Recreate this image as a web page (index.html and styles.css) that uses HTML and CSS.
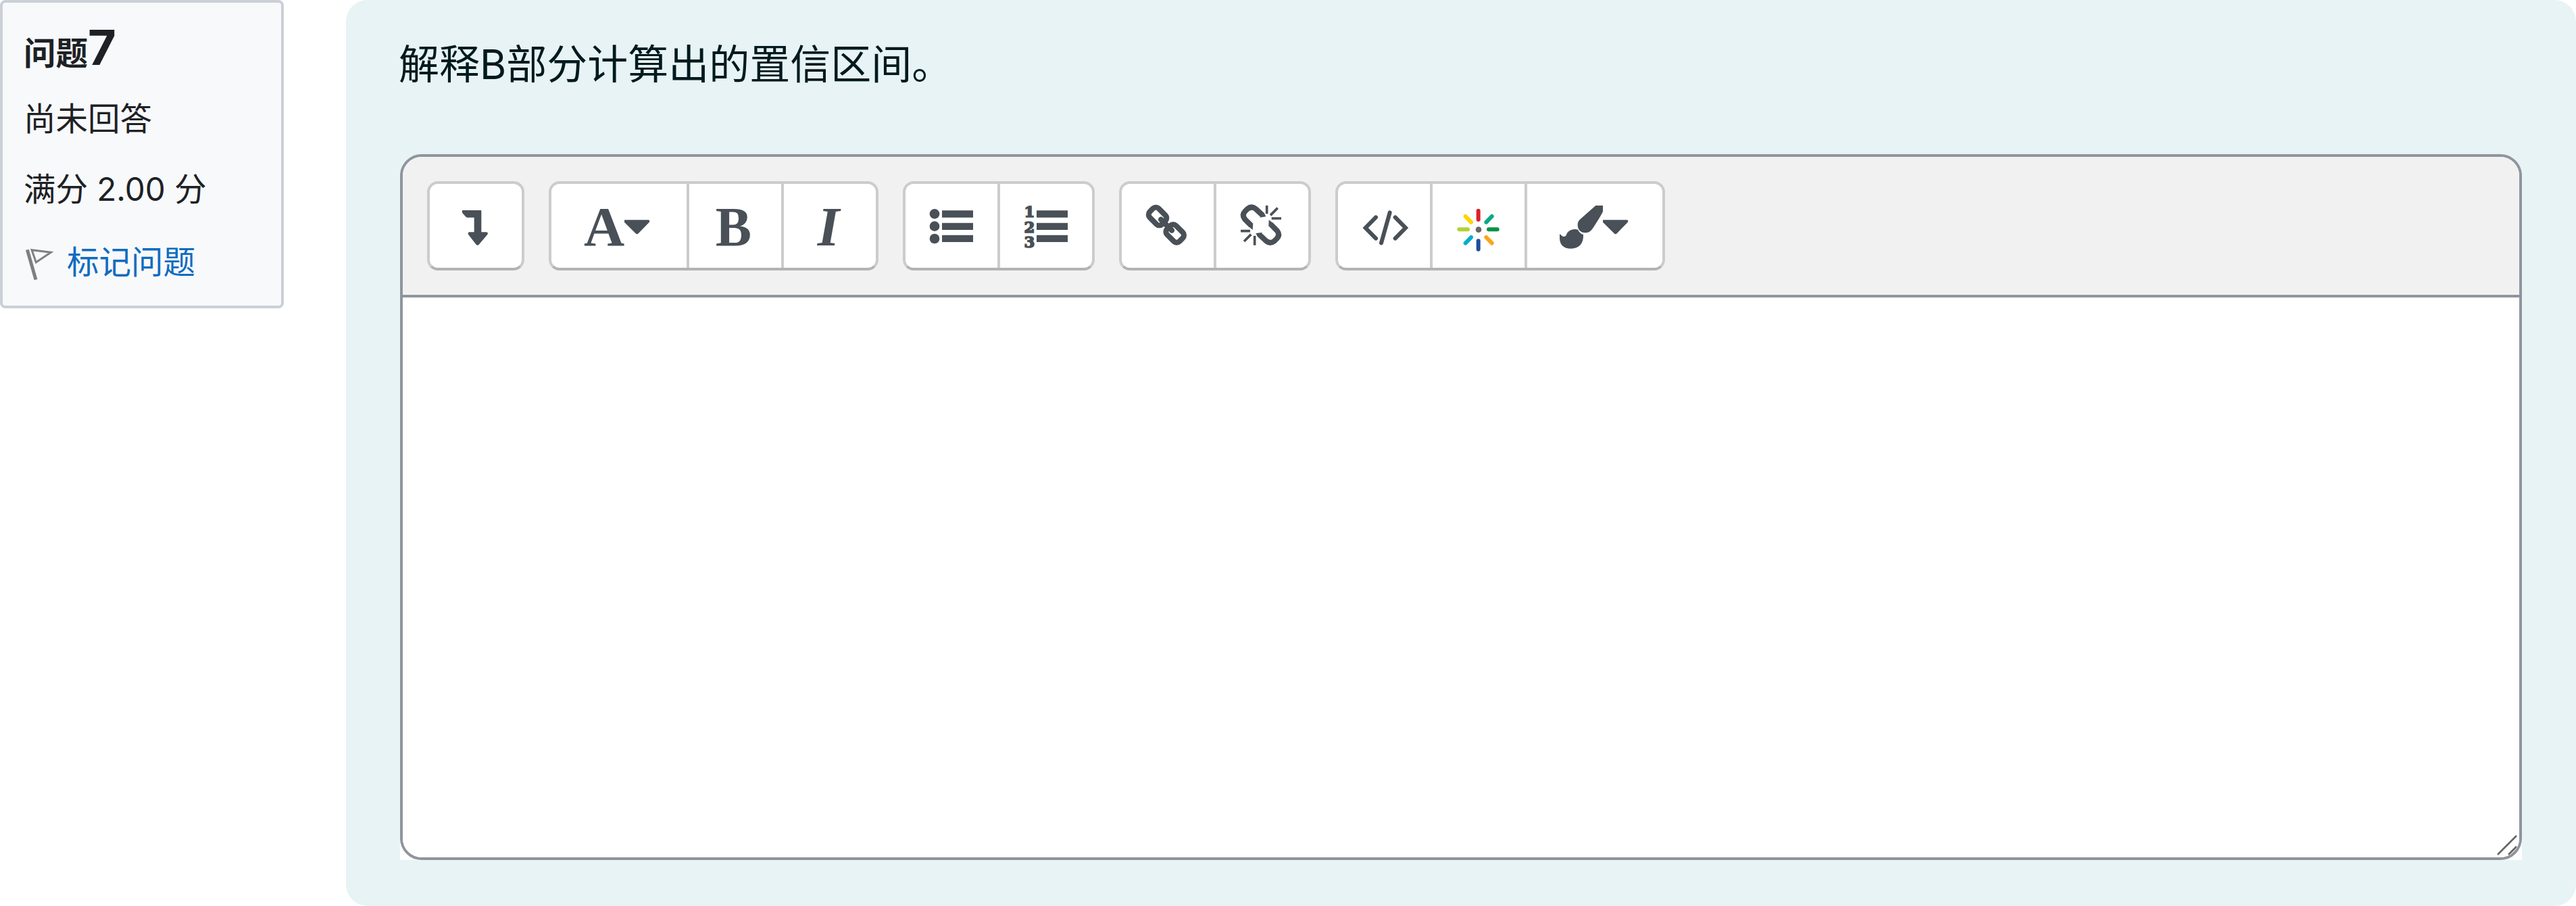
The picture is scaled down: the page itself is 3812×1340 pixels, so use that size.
FILE: index.html
```html
<!DOCTYPE html>
<html lang="zh-CN">
<head>
<meta charset="utf-8">
<title>问题 7</title>
<link rel="stylesheet" href="styles.css">
</head>
<body>
<div class="question">
  <aside class="info">
    <h3 class="number">问题<span class="qno">7</span></h3>
    <div class="state">尚未回答</div>
    <div class="grade">满分 2.00 分</div>
    <a class="flag">
      <svg class="flag-icon" viewBox="0 0 144 150"><g transform="translate(-108 -1100)" fill="none" stroke="#7f7f7f"><path stroke-width="15" d="M124 1110L162 1243"/><path stroke-width="9" d="M144 1111L229 1122L163 1166Z"/></g></svg>
      <span>标记问题</span>
    </a>
  </aside>
  <main class="content">
    <p class="qtext">解释B部分计算出的置信区间。</p>
    <div class="editor-wrap">
      <div class="editor">
        <div class="toolbar">
          <div class="group">
            <button class="btn"><svg viewBox="0 0 408 372"><path d="M144 117H226q3 0 3 3V214H251q11 2 4 12L218 269q-6 6-12 0L172 226q-6-10 4-12H197V149H166q-4 0-7-4L144 128Z"/></svg></button>
          </div>
          <div class="group">
            <button class="btn wide"><svg viewBox="0 0 600 372"><text class="serif" x="144" y="272">A</text><path d="M324 160H431q8 3 3 10L386 220q-6 6-12 0L324 170Z"/></svg></button>
            <button class="btn"><svg viewBox="0 0 408 372"><text class="serif" x="116" y="272" textLength="160" lengthAdjust="spacingAndGlyphs">B</text></svg></button>
            <button class="btn"><svg viewBox="0 0 408 372"><text class="serif italic" x="149" y="272">I</text></svg></button>
          </div>
          <div class="group">
            <button class="btn"><svg viewBox="0 0 408 372"><circle cx="129" cy="133" r="22"/><circle cx="129" cy="188" r="22"/><circle cx="129" cy="243" r="22"/><path d="M162 118H300V149H162ZM162 173H300V204H162ZM162 227H300V258H162Z"/></svg></button>
            <button class="btn"><svg viewBox="0 0 408 372"><text class="digit" x="130" y="147">1</text><text class="digit" x="130" y="215">2</text><text class="digit" x="130" y="283">3</text><path d="M162 118H300V149H162ZM162 173H300V204H162ZM162 227H300V258H162Z"/></svg></button>
          </div>
          <div class="group">
            <button class="btn"><svg viewBox="0 0 408 372"><g class="line" stroke-width="24"><rect x="120" y="116" width="78" height="56" rx="18" transform="rotate(45 159 144)"/><rect x="197" y="192" width="78" height="56" rx="18" transform="rotate(45 236 220)"/><path stroke-linecap="round" d="M174 158L222 206"/></g></svg></button>
            <button class="btn"><svg viewBox="0 0 408 372"><g transform="translate(-480 -66)"><g class="line" stroke-width="24"><path d="M684 204L655 177Q637 162 618 177L608 187Q592 204 606 222L634 250"/><path d="M672 292L701 319Q719 334 738 319L748 309Q764 292 750 274L722 246"/></g><path d="M692 194L700 211L672 215ZM643 240L641 270L624 256ZM664 302L655 285L684 281ZM712 256L713 226L732 240Z"/><path class="line" stroke-width="11" d="M704 162V199M752 173L720 205M725 219H768M588 275H630M603 321L634 290M650 296V338"/></g></svg></button>
          </div>
          <div class="group">
            <button class="btn"><svg viewBox="0 0 408 372"><path class="line" stroke-width="18" stroke-linecap="round" d="M168 148L122 195L168 242M230 127L192 262M254 148L300 195L254 242"/></svg></button>
            <button class="btn"><svg viewBox="0 0 408 372"><g transform="translate(-480 -66)" stroke-width="18" stroke-linecap="round"><path stroke="#da2128" d="M683 185V224"/><path stroke="#0aaa85" d="M743 210L718 236"/><path stroke="#009444" d="M729 268H767"/><path stroke="#faa61a" d="M718 303L743 329"/><path stroke="#1b4f9c" d="M683 319V356"/><path stroke="#00aed1" d="M651 303L626 329"/><path stroke="#b2d235" d="M598 268H636"/><path stroke="#ffd400" d="M626 210L651 236"/><circle cx="684" cy="269" r="13" fill="#666"/></g></svg></button>
            <button class="btn wide"><svg viewBox="0 0 600 372"><path transform="translate(-900 -66)" d="M1204 162H1236V188Q1230 203 1191 263Q1178 283 1157 283C1137 283 1123 268 1124 246Q1124 232 1136 222ZM1044 288L1056 298Q1066 304 1073 294C1078 278 1092 267 1112 267Q1118 267 1125 269C1130 280 1138 287 1149 291C1151 330 1130 353 1095 353C1060 353 1044 335 1044 305Z"/><path d="M336 160H443q8 3 3 10L398 220q-6 6-12 0L336 170Z"/></svg></button>
          </div>
        </div>
        <div class="area">
          <svg class="grip" viewBox="0 0 120 120"><g transform="translate(-144 -84)" fill="none" stroke="#666" stroke-width="8"><path stroke="#ddd" stroke-width="16" d="M226 196L258 164"/><path d="M168 192L252 108M216 192L252 156"/></g></svg>
        </div>
      </div>
    </div>
  </main>
</div>
</body>
</html>
```
FILE: styles.css
```css
* { box-sizing: border-box; }
body {
  margin: 0;
  background: #fff;
  color: #1d2125;
  font-family: Inter, "Noto Sans CJK SC", sans-serif;
}
.question {
  display: flex;
  align-items: flex-start;
  justify-content: space-between;
  height: 1340px;
}
.info {
  width: 420px;
  height: 456px;
  padding: 30px 30px 30px 31px;
  border: 4px solid #cad0d7;
  border-radius: 8px;
  background: #f8f9fb;
  font-size: 47.5px;
  line-height: 72px;
}
.number {
  margin: 0;
  height: 106px;
  font-size: 47.5px;
  font-weight: 700;
  line-height: 72px;
}
.qno { font-size: 72px; line-height: 1; }
.state { height: 104px; }
.grade { height: 108px; }
.flag {
  display: flex;
  align-items: center;
  gap: 16px;
  color: #0f6cbf;
}
.flag-icon { width: 48px; height: 50px; margin-top: 6px; }
.content {
  width: 3300px;
  height: 1340px;
  padding: 60px 80px 68px;
  border-radius: 32px;
  background: #e7f3f5;
  color: #001a1e;
}
.qtext {
  margin: 0 0 0 -2px;
  height: 168px;
  font-size: 60px;
  line-height: 71px;
}
.editor-wrap {
  height: 1044px;
  border-radius: 32px 32px 0 0;
  background: #fff;
}
.editor {
  display: flex;
  flex-direction: column;
  height: 100%;
  overflow: hidden;
  border: 4px solid #8f959e;
  border-radius: 32px;
}
.toolbar {
  display: flex;
  gap: 36px;
  height: 208px;
  padding: 36px;
  border-bottom: 4px solid #8f959e;
  background: #f1f1f1;
}
.group {
  display: flex;
  height: 132px;
  border: 4px solid #ccc;
  border-bottom-color: #b3b3b3;
  border-radius: 16px;
  background: #fff;
}
.btn {
  width: 136px;
  height: 124px;
  padding: 0;
  border: 0;
  background: none;
}
.btn.wide { width: 200px; }
.btn + .btn { width: 140px; border-left: 4px solid #ccc; }
.btn + .btn.wide { width: 204px; }
.btn svg {
  display: block;
  width: 100%;
  height: 100%;
  fill: #495057;
}
.line { fill: none; stroke: #495057; }
.serif { font: bold 250px "Liberation Serif", serif; }
.italic { font-style: italic; }
.digit {
  font: bold 68px "DejaVu Serif", serif;
  text-anchor: middle;
  stroke: #495057;
  stroke-width: 5px;
}
.area { position: relative; flex: 1; background: #fff; }
.grip {
  position: absolute;
  right: 0;
  bottom: 0;
  width: 40px;
  height: 40px;
}
```
